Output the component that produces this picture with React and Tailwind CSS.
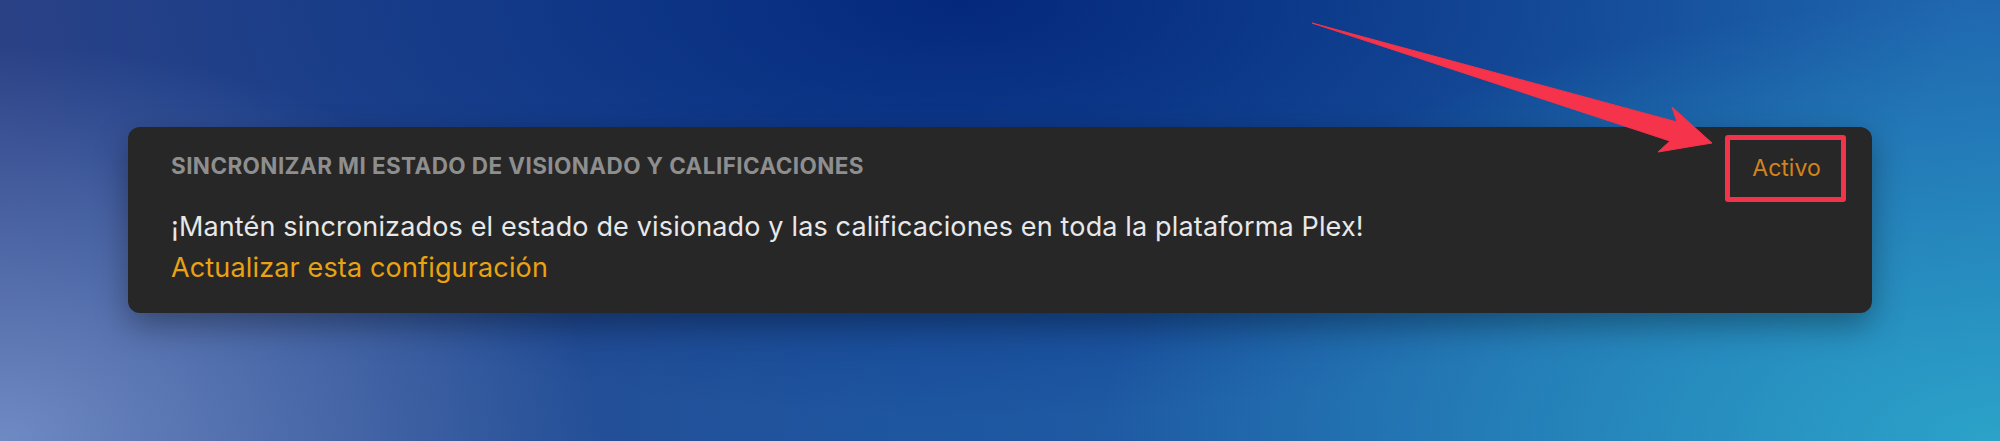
import React from 'react';

const Arrow = () => (
    // red annotation arrow pointing at the "Activo" badge
    <svg className="absolute left-0 top-0 pointer-events-none" width="2000" height="441" viewBox="0 0 2000 441">
        <polygon
            points="1312,23 1677,122 1672,107 1712,143 1658,152 1670,141"
            fill="#f5334a"
            stroke="#f5334a"
            strokeWidth="1"
            strokeLinejoin="round"
        />
    </svg>
);

export default function App() {
    return (
        <div className="relative w-[2000px] h-[441px] overflow-hidden font-['Inter',sans-serif] bg-[radial-gradient(ellipse_30%_90%_at_0%_100%,rgba(118,146,202,0.9),rgba(118,146,202,0)),radial-gradient(ellipse_45%_100%_at_100%_100%,rgba(44,166,202,0.95),rgba(44,166,202,0)),radial-gradient(ellipse_50%_95%_at_48%_0%,rgba(4,40,124,1),rgba(4,40,124,0)),linear-gradient(90deg,#2c4286_0%,#1e56a0_45%,#1f68b0_100%)]">
            <div className="pt-[127px] px-[128px]">
                <div className="h-[186px] rounded-[12px] bg-[#272727] shadow-[0_12px_32px_rgba(0,0,0,0.35)] flex justify-between pt-[8px] pl-[43px] pr-[26px]">
                    <div className="pt-[18px]">
                        <h3 className="text-[22.5px] leading-[26px] tracking-[0.4px] font-bold uppercase text-[#8e8e8e]">
                            Sincronizar mi estado de visionado y calificaciones
                        </h3>
                        <p className="mt-[28px] text-[27px] leading-[40px] tracking-[0.15px] text-[#e8e8e8]">
                            ¡Mantén sincronizados el estado de visionado y las calificaciones en toda la plataforma Plex!
                        </p>
                        <a className="block text-[27px] leading-[41px] tracking-[0.15px] text-[#e9a312]">Actualizar esta configuración</a>
                    </div>
                    <div className="w-[121px] h-[67px] border-[5px] border-[#f2334a] rounded-[3px] flex items-center justify-center pl-[2px]">
                        <span className="text-[23px] text-[#d3831c]">Activo</span>
                    </div>
                </div>
            </div>
            <Arrow />
        </div>
    );
}
